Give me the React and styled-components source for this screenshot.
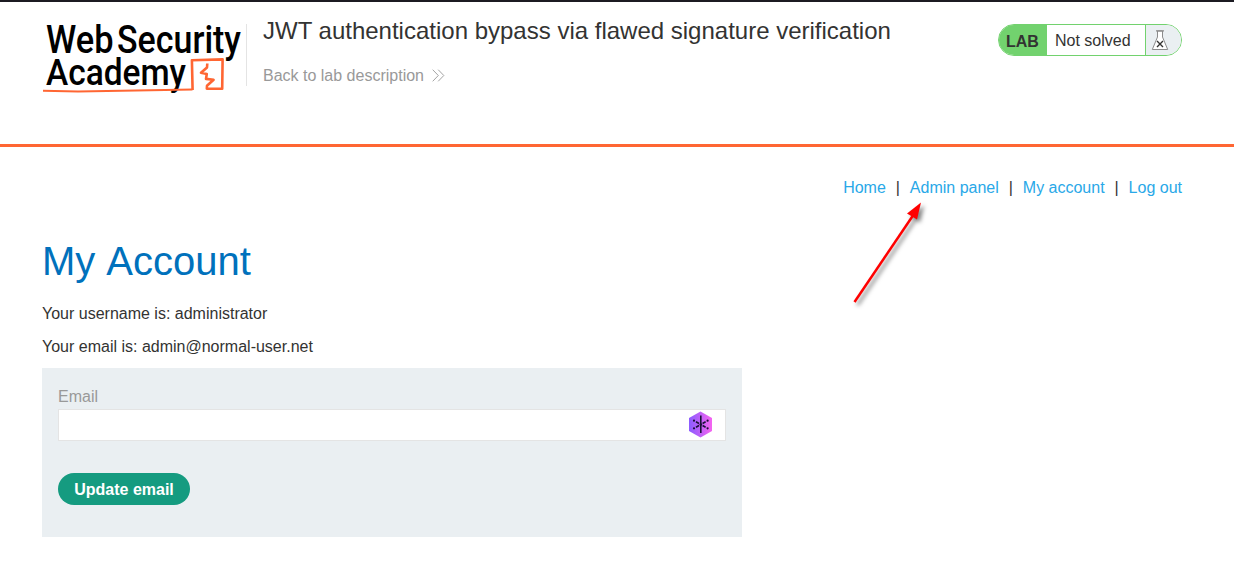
import React from "react";
import styled, { createGlobalStyle } from "styled-components";

const GlobalStyle = createGlobalStyle`
  *, *::before, *::after { box-sizing: border-box; }
  body {
    margin: 0;
    background: #fff;
    color: #333332;
    font: 16px/20px "Liberation Sans", Arial, sans-serif;
  }
  h1, h2, p { margin: 0; font-weight: 400; }
  a { text-decoration: none; }
`;

const Page = styled.div`
  position: relative;
  height: 584px;
  overflow: hidden;
  border-top: 2px solid #1c1b22;
`;

const Header = styled.header`
  display: flex;
  align-items: flex-start;
  height: 145px;
  padding: 14px 52px 0 40px;
  border-bottom: 3px solid #ff6633;
`;

const LogoSvg = styled.svg`
  display: block;
  flex: none;
  width: 206px;
  height: 84px;
  overflow: visible;
`;

const LogoText = styled.text`
  font-family: Roboto, sans-serif;
  font-weight: 500;
  fill: #000;
`;

const TitleBlock = styled.div`
  height: 62px;
  margin-top: 8px;
  padding-left: 16px;
  border-left: 1px solid #e4e4e4;
  flex: 1;
`;

const Title = styled.h2`
  margin-top: -8px;
  font-size: 24px;
  line-height: 30px;
  white-space: nowrap;
`;

const BackLink = styled.a`
  display: flex;
  align-items: center;
  gap: 8px;
  margin-top: 20px;
  color: #999;
`;

const Status = styled.div`
  display: flex;
  width: 184px;
  height: 32px;
  margin-top: 8px;
  overflow: hidden;
  border: 1px solid #72d26e;
  border-radius: 16px;
`;

const StatusTag = styled.span`
  width: 48px;
  padding-left: 7px;
  background: #72d26e;
  font-weight: 700;
  line-height: 33px;
`;

const StatusText = styled.span`
  flex: 1;
  padding-left: 8px;
  line-height: 31px;
`;

const StatusIcon = styled.span`
  width: 36px;
  padding: 5px 0 0 5px;
  border-left: 1px solid #72d26e;
  background: #eaeff2;
`;

const Icon = styled.svg`
  display: block;
  flex: none;
`;

const Main = styled.main`
  padding: 31px 52px 0 42px;
`;

const Nav = styled.nav`
  display: flex;
  justify-content: flex-end;
`;

const NavLink = styled.a`
  color: #29a8e8;
`;

const Separator = styled.span`
  width: 24px;
  text-align: center;
`;

const Heading = styled.h1`
  margin-top: 39px;
  color: #0071bc;
  font-size: 40px;
  line-height: 48px;
  word-spacing: 2px;
`;

const Line = styled.p`
  margin-top: ${({ $gap }) => $gap}px;
`;

const Form = styled.form`
  width: 700px;
  height: 169px;
  margin-top: 11px;
  padding: 19px 16px 0;
  background: #eaeff2;
`;

const Label = styled.label`
  display: block;
  color: #999;
`;

const Field = styled.div`
  display: flex;
  align-items: center;
  height: 32px;
  margin-top: 2px;
  padding: 0 12px 1px 0;
  border: 1px solid #e4e4e4;
  background: #fff;
`;

const Input = styled.input`
  flex: 1;
  height: 28px;
  border: 0;
  outline: 0;
  background: transparent;
  font: inherit;
`;

const Button = styled.button`
  display: block;
  width: 132px;
  height: 32px;
  margin-top: 32px;
  padding: 1px 0 0;
  border: 0;
  border-radius: 16px;
  background: #159b80;
  color: #fff;
  font: inherit;
  font-weight: 700;
  line-height: 31px;
`;

const Arrow = styled.svg`
  position: absolute;
  left: 845px;
  top: 193px;
  filter: drop-shadow(3px 3px 2px rgba(0, 0, 0, 0.5));
`;

const Logo = () => (
  <LogoSvg viewBox="40 16 206 84" aria-label="Web Security Academy">
    <LogoText x="46" y="53" fontSize="38" textLength="67.5" lengthAdjust="spacingAndGlyphs">Web</LogoText>
    <LogoText x="117" y="53" fontSize="38" textLength="124" lengthAdjust="spacingAndGlyphs">Security</LogoText>
    <LogoText x="46" y="85" fontSize="36.5" textLength="140" lengthAdjust="spacingAndGlyphs">Academy</LogoText>
    <g fill="none" stroke="#ff6633" strokeWidth="2.6" strokeLinejoin="round">
      <path d="M192.600 90 191.900 60.200 222.600 59.400 222.200 88.800 206.800 88.600 207 85.800 213.600 79.800 206 78.900 206.800 74 201 72.800 207 67.500 207.300 63.500" />
      <path d="M43 90.700 78 91.400 165 89.900 192.500 89.600" strokeWidth="2" />
    </g>
  </LogoSvg>
);

const Chevrons = () => (
  <Icon width="13" height="15" viewBox="0 0 13 15" fill="none" stroke="#999" strokeWidth="0.9">
    <path d="M.7.7 6.300 6.500.7 12.300M6.200.7l5.600 5.800-5.600 5.800" />
  </Icon>
);

const Flask = () => (
  <Icon width="18" height="21" viewBox="0 0 18 21" fill="none" stroke="#8b8b8b">
    <path fill="#fff" d="M6.500 1v6L1.300 19.500h15.400L11.500 7V1z" />
    <path d="M5 .9h8" strokeWidth="1.3" />
    <path d="m6 11 6 6M12 11l-6 6" stroke="#333332" strokeWidth="1.4" />
  </Icon>
);

const Hexagon = () => (
  <Icon width="25" height="27" viewBox="0 0 25 27">
    <defs>
      <linearGradient id="hex">
        <stop offset="0" stopColor="#8b5cff" />
        <stop offset="1" stopColor="#f564f0" />
      </linearGradient>
    </defs>
    <path fill="url(#hex)" d="M12.500.4 24 7v13l-11.500 6.600L1 20V7z" />
    <g stroke="#1a1038" strokeWidth="1.6" fill="none">
      <path d="M12.800 4.500v17.500" />
      <path d="m8 10.800 3 1.700M17.600 10.800l-3 1.700M8 16.200l3-1.700M17.600 16.200l-3-1.700" />
    </g>
    <g fill="#1a1038">
      <circle cx="6" cy="9.700" r="1.100" />
      <circle cx="19.600" cy="9.700" r="1.100" />
      <circle cx="6" cy="17.300" r="1.100" />
      <circle cx="19.600" cy="17.300" r="1.100" />
      <circle cx="12.800" cy="13.500" r="1.300" />
    </g>
  </Icon>
);

export default function App() {
  return (
    <Page>
      <GlobalStyle />
      <Header>
        <Logo />
        <TitleBlock>
          <Title>JWT authentication bypass via flawed signature verification</Title>
          <BackLink>
            Back to lab description
            <Chevrons />
          </BackLink>
        </TitleBlock>
        <Status>
          <StatusTag>LAB</StatusTag>
          <StatusText>Not solved</StatusText>
          <StatusIcon><Flask /></StatusIcon>
        </Status>
      </Header>
      <Main>
        <Nav>
          <NavLink>Home</NavLink>
          <Separator>|</Separator>
          <NavLink>Admin panel</NavLink>
          <Separator>|</Separator>
          <NavLink>My account</NavLink>
          <Separator>|</Separator>
          <NavLink>Log out</NavLink>
        </Nav>
        <Heading>My Account</Heading>
        <Line $gap={19}>Your username is: administrator</Line>
        <Line $gap={13}>Your email is: admin@normal-user.net</Line>
        <Form>
          <Label htmlFor="email">Email</Label>
          <Field>
            <Input id="email" />
            <Hexagon />
          </Field>
          <Button type="button">Update email</Button>
        </Form>
      </Main>
      <Arrow width="90" height="120" viewBox="845 195 90 120">
        <path d="M854.500 302 914 214" stroke="#f00" strokeWidth="2.500" />
        <path d="M921 202.500 907 213.500 917 219.500z" fill="#f00" />
      </Arrow>
    </Page>
  );
}
